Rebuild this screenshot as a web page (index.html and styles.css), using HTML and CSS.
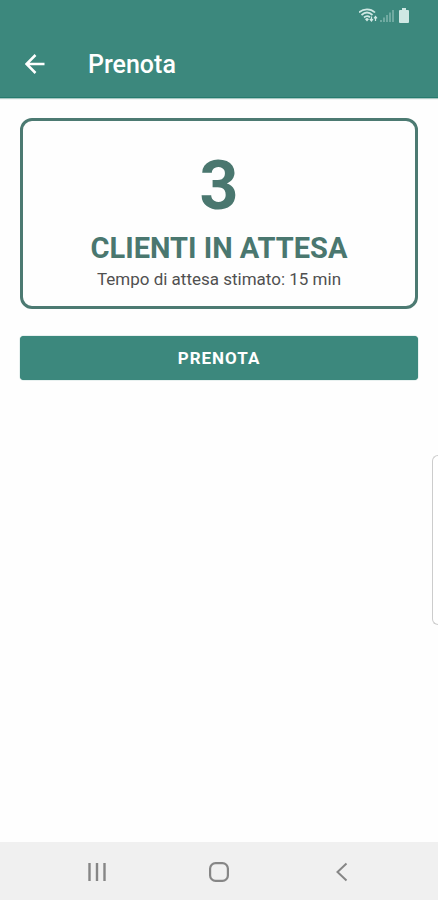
FILE: index.html
```html
<!DOCTYPE html>
<html lang="it">
<head>
    <meta charset="UTF-8">
    <meta name="viewport" content="width=device-width, initial-scale=1.0">
    <title>Prenota</title>
    <link rel="stylesheet" href="styles.css">
</head>
<body>
    <header class="header">
        <div class="status-bar">
            <svg width="20" height="16" viewBox="0 0 20 16" fill="none" stroke="currentColor">
                <path d="M0 4.500C4.500 .2 11.500 .2 16 4.500M2.500 7C6 3.800 10 3.800 13.500 7M5 9.500C7 7.800 9 7.800 11 9.300" stroke-width="1.700"/>
                <path d="M6 11.200L8 9.800L10 11.200L8 13.500Z" fill="currentColor" stroke="none"/>
                <path d="M12.500 8.500V13M10.800 11L12.500 13L14 11M16.500 13V8.500M15 10.300L16.500 8.500L18 10.300" stroke-width="1.200"/>
            </svg>
            <svg class="signal" width="14" height="14" viewBox="0 0 14 14" fill="none" stroke="currentColor" stroke-width="1.500">
                <path d="M1 13V11M4 13V8.500M7 13V6M10 13V3.500M13 13V1"/>
            </svg>
            <svg width="12" height="16" viewBox="0 0 12 16" fill="currentColor">
                <path d="M4 0H8V2H10Q11 2 11 3V14Q11 15 10 15H2Q1 15 1 14V3Q1 2 2 2H4Z"/>
            </svg>
        </div>
        <div class="toolbar">
            <button class="back" aria-label="Indietro">
                <svg width="20" height="20" viewBox="0 0 20 20" fill="none" stroke="currentColor" stroke-width="2.500">
                    <path d="M19.500 10H2M10.500 1L1.500 10L10.500 19"/>
                </svg>
            </button>
            <h1>Prenota</h1>
        </div>
    </header>

    <main class="container">
        <section class="card">
            <div class="number">3</div>
            <h2>CLIENTI IN ATTESA</h2>
            <p>Tempo di attesa stimato: 15 min</p>
        </section>
        <button class="book">PRENOTA</button>
    </main>

    <div class="edge-panel"></div>

    <nav class="nav-bar">
        <button aria-label="Recenti">
            <svg width="20" height="20" viewBox="0 0 20 20" fill="none" stroke="currentColor" stroke-width="2.400">
                <path d="M2.500 1V19M10 1V19M17.500 1V19"/>
            </svg>
        </button>
        <button aria-label="Home">
            <svg width="20" height="20" viewBox="0 0 20 20" fill="none" stroke="currentColor" stroke-width="2.200">
                <rect x="1.100" y="1.100" width="17.800" height="17.800" rx="5.500"/>
            </svg>
        </button>
        <button aria-label="Indietro">
            <svg width="20" height="20" viewBox="0 0 20 20" fill="none" stroke="currentColor" stroke-width="2">
                <path d="M15.500 1.500L6.500 10L15.500 18.500"/>
            </svg>
        </button>
    </nav>
</body>
</html>
```
FILE: styles.css
```css
body {
    font-family: Roboto, "Liberation Sans", sans-serif;
    margin: 0;
    min-height: 100vh;
    display: flex;
    flex-direction: column;
    background-color: #fefefe;
    overflow-x: hidden;
}
h1, h2, p {
    margin: 0;
}
button {
    border: none;
    padding: 0;
    background: none;
    color: inherit;
    font-family: inherit;
    cursor: pointer;
}
svg {
    display: block;
}
.header {
    background-color: #3c887d;
    color: #fff;
    border-bottom: 1px solid #257b6e;
    box-shadow: 0 1px 1px #a9c8c3;
}
.status-bar {
    display: flex;
    justify-content: flex-end;
    align-items: center;
    height: 31px;
    padding-right: 28px;
    color: #cfe8e4;
}
.signal {
    margin: 0 4px 0 1px;
    color: #80b5ad;
}
.toolbar {
    display: flex;
    align-items: center;
    height: 66px;
    padding-left: 25px;
    gap: 43px;
}
.toolbar h1 {
    font-size: 25px;
    font-weight: 500;
}
.container {
    flex: 1;
    padding: 20px;
}
.card {
    border: 3px solid #4c7a72;
    border-radius: 12px;
    padding: 23px 16px 16px;
    text-align: center;
    color: #4a776f;
}
.number {
    font-size: 68px;
    line-height: 84px;
    font-weight: bold;
}
.card h2 {
    font-size: 29px;
    line-height: 40px;
    font-weight: bold;
}
.card p {
    font-size: 17px;
    line-height: 22px;
    color: #505050;
}
.book {
    display: block;
    width: 100%;
    height: 44px;
    margin-top: 27px;
    border-radius: 4px;
    background-color: #3c887d;
    color: #fff;
    font-size: 17px;
    font-weight: bold;
    letter-spacing: 1px;
    box-shadow: 0 0 1px #257b6e;
}
/* handle of the side panel, runs off the right edge */
.edge-panel {
    position: absolute;
    top: 455px;
    right: 0;
    width: 5px;
    height: 168px;
    border: 1px solid #ccc;
    border-right: none;
    border-radius: 8px 0 0 8px;
    background-color: #fff;
}
.nav-bar {
    display: grid;
    grid-template-columns: repeat(3, 1fr);
    height: 58px;
    padding: 2px 36px 0;
    box-sizing: border-box;
    background-color: #f0f0f0;
    color: #868686;
}
.nav-bar button {
    display: flex;
    align-items: center;
    justify-content: center;
}
```
